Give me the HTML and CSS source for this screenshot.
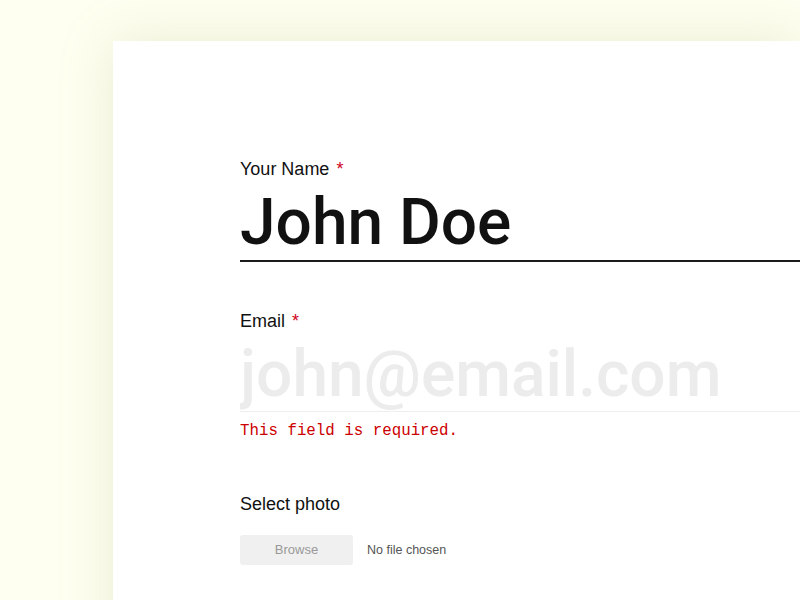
FILE: index.html
```html
<!DOCTYPE html>
<html lang="en">
<head>
    <meta charset="UTF-8">
    <meta name="viewport" content="width=device-width, initial-scale=1.0">
    <title>Form</title>
    <link rel="stylesheet" href="styles.css">
</head>
<body>
    <div class="card">
        <form class="form">
            <div class="field">
                <label for="name">Your Name <span class="req">*</span></label>
                <input type="text" id="name" class="big-input filled" value="John Doe">
            </div>
            <div class="field field-error">
                <label for="email">Email <span class="req">*</span></label>
                <input type="text" id="email" class="big-input" placeholder="john@email.com">
                <div class="error">This field is required.</div>
            </div>
            <div class="field">
                <label>Select photo</label>
                <div class="file-row">
                    <span class="browse">Browse</span>
                    <span class="file-name">No file chosen</span>
                </div>
            </div>
        </form>
    </div>
</body>
</html>
```

FILE: styles.css
```css
body {
    margin: 0;
    padding: 0;
    background-color: #fefff0;
    font-family: "Liberation Sans", Arial, sans-serif;
    overflow: hidden;
    height: 100vh;
}
.card {
    margin: 41px 0 0 113px;
    padding: 116px 0 0 127px;
    background-color: #fff;
    box-shadow: 0 0 50px rgba(170, 170, 110, 0.22);
    height: 600px;
}
.field {
    margin-bottom: 47px;
}
.field-error {
    margin-bottom: 51px;
}
.field label {
    display: block;
    font-size: 18px;
    line-height: 24px;
    color: #111;
}
.req {
    color: #d0021b;
    margin-left: 2px;
}
.big-input {
    display: block;
    width: 100%;
    box-sizing: border-box;
    margin: 5px 0 0 0;
    padding: 0 0 1px 0;
    border: none;
    border-bottom: 1px solid #eee;
    outline: none;
    font-family: Roboto, "Liberation Sans", Arial, sans-serif;
    font-weight: 500;
    font-size: 64px;
    line-height: 72px;
    height: 74px;
    color: #111;
    background: transparent;
}
.big-input.filled {
    height: 76px;
    padding-bottom: 2px;
    border-bottom: 2px solid #1a1a1a;
}
.big-input::placeholder {
    color: #ececec;
}
.error {
    margin-top: 9px;
    font-family: "Liberation Mono", "Courier New", monospace;
    font-size: 15.8px;
    line-height: 20px;
    color: #cc0000;
}
.file-row {
    display: flex;
    align-items: center;
    margin-top: 19px;
    gap: 14px;
}
.browse {
    display: inline-block;
    width: 113px;
    height: 30px;
    line-height: 30px;
    text-align: center;
    background-color: #f0f0f0;
    border-radius: 3px;
    font-size: 13px;
    color: #999;
}
.file-name {
    font-size: 12.5px;
    color: #555;
}
```
